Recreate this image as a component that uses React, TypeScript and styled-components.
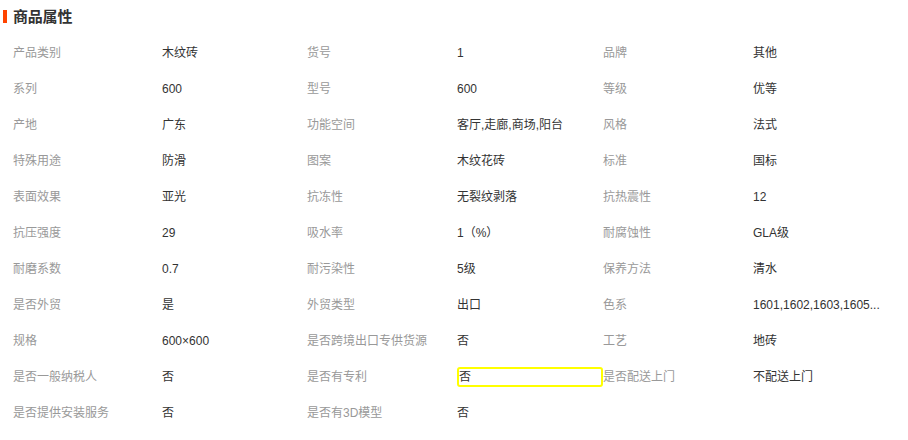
import React from 'react'
import styled, { createGlobalStyle } from 'styled-components'

const GlobalStyle = createGlobalStyle`
    body{
        margin: 0;
        background: #fff;
        font-family: "Liberation Sans", "Noto Sans CJK SC", sans-serif;
    }
`

const Panel = styled.div`
    width: 908px;
    height: 440px;
    background: #fff;
    overflow: hidden;
`

const Title = styled.h3`
    position: relative;
    margin: 0;
    height: 35px;
    line-height: 34px;
    padding-left: 13px;
    font-size: 15px;
    font-weight: bold;
    color: #333;
    letter-spacing: -0.2px;

    &::before{
        content: '';
        position: absolute;
        left: 3px;
        top: 10px;
        width: 4px;
        height: 13px;
        background: #ff4400;
    }
`

const Grid = styled.div`
    display: grid;
    grid-template-columns: 149px 145px 150px 146px 150px 140px;
    grid-auto-rows: 36px;
    padding-left: 13px;
    font-size: 12px;
`

const Label = styled.div`
    align-self: center;
    height: 20px;
    line-height: 20px;
    color: #999;
    white-space: nowrap;
`

const Value = styled.div<{ $active?: boolean }>`
    align-self: center;
    height: 20px;
    line-height: 20px;
    color: #333;
    white-space: nowrap;
    box-sizing: border-box;

    ${p => p.$active && `
        line-height: 16px;
        border: 2px solid #ffff00;
        border-radius: 3px;
    `}
`

const rows: [string, string][] = [
    ['产品类别', '木纹砖'], ['货号', '1'], ['品牌', '其他'],
    ['系列', '600'], ['型号', '600'], ['等级', '优等'],
    ['产地', '广东'], ['功能空间', '客厅,走廊,商场,阳台'], ['风格', '法式'],
    ['特殊用途', '防滑'], ['图案', '木纹花砖'], ['标准', '国标'],
    ['表面效果', '亚光'], ['抗冻性', '无裂纹剥落'], ['抗热震性', '12'],
    ['抗压强度', '29'], ['吸水率', '1（%）'], ['耐腐蚀性', 'GLA级'],
    ['耐磨系数', '0.7'], ['耐污染性', '5级'], ['保养方法', '清水'],
    ['是否外贸', '是'], ['外贸类型', '出口'], ['色系', '1601,1602,1603,1605...'],
    ['规格', '600×600'], ['是否跨境出口专供货源', '否'], ['工艺', '地砖'],
    ['是否一般纳税人', '否'], ['是否有专利', '否'], ['是否配送上门', '不配送上门'],
    ['是否提供安装服务', '否'], ['是否有3D模型', '否'],
]

function App() {
    return (
        <Panel>
            <GlobalStyle />
            <Title>商品属性</Title>
            <Grid>
                {rows.map(([k, v], i) => (
                    <React.Fragment key={i}>
                        <Label>{k}</Label>
                        <Value $active={i === 28}>{v}</Value>
                    </React.Fragment>
                ))}
            </Grid>
        </Panel>
    )
}

export default App
